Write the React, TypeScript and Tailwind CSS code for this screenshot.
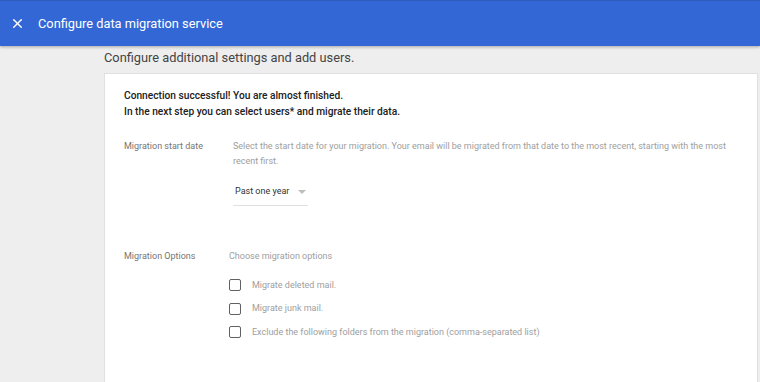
import { X } from "lucide-react";

const options = [
  "Migrate deleted mail.",
  "Migrate junk mail.",
  "Exclude the following folders from the migration (comma-separated list)",
];

export default function App() {
  return (
    <div className="w-[760px] h-[382px] overflow-hidden bg-[#eeeeee] font-['Roboto',sans-serif]">
      {/* Шапка */}
      <header className="h-[46px] bg-[#3367d6] border-t border-[#2f5bbd] flex items-center shadow-[0_1px_3px_rgba(0,0,0,0.3)] relative">
        <X size={15} strokeWidth={2.25} className="text-white ml-[10px]" />
        <span className="ml-[13px] text-white text-[12.8px]">Configure data migration service</span>
      </header>

      <div className="pl-[104px] pr-[2px]">
        <h2 className="text-[12.8px] text-[#444] pt-[2px] h-[27px] leading-[19px]">
          Configure additional settings and add users.
        </h2>

        <div className="bg-white border border-[#e0e0e0] h-[320px] pl-[19px] pt-[14px]">
          <p className="text-[10.2px] font-medium text-[#212121] leading-[16px]">
            Connection successful! You are almost finished.
            <br />
            In the next step you can select users* and migrate their data.
          </p>

          <div className="flex mt-[19px]">
            <div className="w-[109px] text-[9px] text-[#757575] leading-[15px]">Migration start date</div>
            <div className="flex-1 pr-[30px]">
              <p className="text-[9px] text-[#9e9e9e] leading-[15px]">
                Select the start date for your migration. Your email will be migrated from that date to the most recent, starting with the most recent first.
              </p>
              <div className="mt-[16px] w-[75px] border-b border-[#e0e0e0] flex items-center pl-[2px] pb-[6px]">
                <span className="text-[9px] text-[#333] whitespace-nowrap">Past one year</span>
                <span className="ml-[9px] w-0 h-0 border-l-[4px] border-r-[4px] border-t-[4px] border-l-transparent border-r-transparent border-t-[#bdbdbd]"></span>
              </div>
            </div>
          </div>

          <div className="flex mt-[43px]">
            <div className="w-[105px] text-[9px] text-[#757575] leading-[15px]">Migration Options</div>
            <div className="flex-1">
              <p className="text-[9px] text-[#9e9e9e] leading-[15px]">Choose migration options</p>
              <div className="mt-[15px] flex flex-col gap-[10px]">
                {options.map((o) => (
                  <label key={o} className="flex items-center">
                    <span className="w-[12px] h-[12px] border-[1.5px] border-[#616161] rounded-[2px]"></span>
                    <span className="ml-[11px] text-[9px] text-[#9e9e9e]">{o}</span>
                  </label>
                ))}
              </div>
            </div>
          </div>
        </div>
      </div>
    </div>
  );
}
